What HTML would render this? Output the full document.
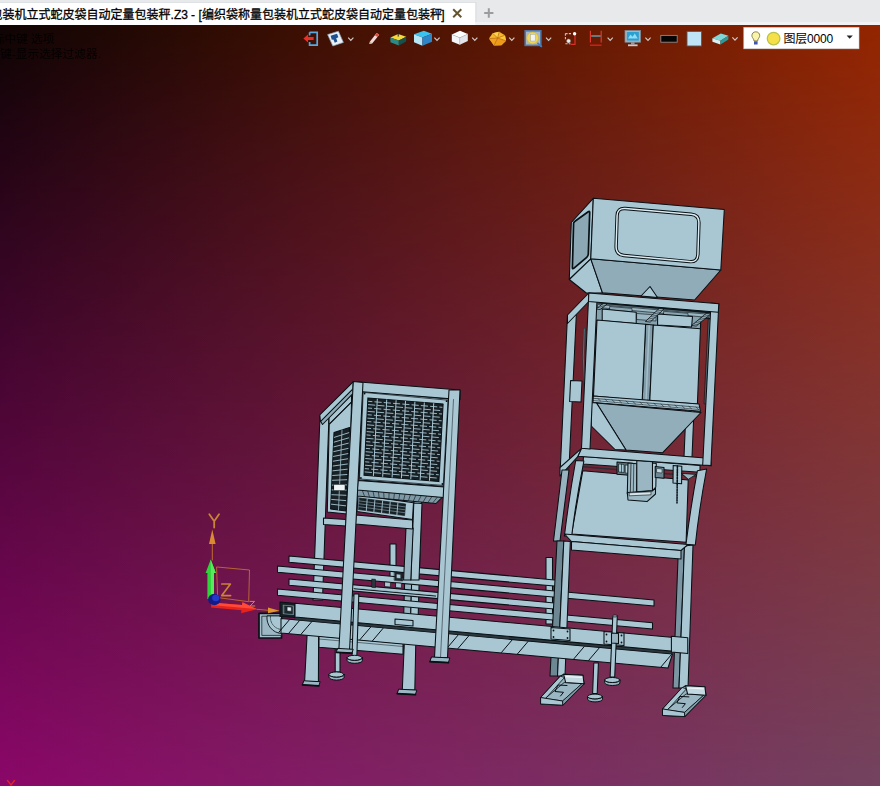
<!DOCTYPE html>
<html><head><meta charset="utf-8"><title>Z3</title>
<style>
html,body{margin:0;padding:0;width:880px;height:786px;overflow:hidden;background:#3a0a20;font-family:"Liberation Sans",sans-serif;}
svg{position:absolute;left:0;top:0;display:block}
</style></head><body>
<svg width="880" height="786" viewBox="0 0 880 786">
<defs>
<linearGradient id="gt" x1="0" y1="0" x2="1" y2="0"><stop offset="0" stop-color="#0e0403"/><stop offset="1" stop-color="#932500"/></linearGradient>
<linearGradient id="gb" x1="0" y1="0" x2="1" y2="0"><stop offset="0" stop-color="#8b0869"/><stop offset="1" stop-color="#73435f"/></linearGradient>
<linearGradient id="gm" x1="0" y1="0" x2="0" y2="1"><stop offset="0" stop-color="#fff"/><stop offset="1" stop-color="#000"/></linearGradient>
<mask id="mk" maskUnits="userSpaceOnUse" x="0" y="25" width="880" height="761"><rect x="0" y="25" width="880" height="761" fill="url(#gm)"/></mask>
</defs>
<rect x="0" y="25" width="880" height="761" fill="url(#gb)"/>
<rect x="0" y="25" width="880" height="761" fill="url(#gt)" mask="url(#mk)"/>
<!-- hint text -->
<g fill="#000" opacity="0.85" font-family="'Liberation Sans','Noto Sans CJK SC',sans-serif" font-size="11.7">
<text x="-18.9" y="42.5">鼠标中键 选项</text>
<text x="-11.5" y="58.2">右键-显示选择过滤器.</text>
</g>
<!-- model -->
<g stroke-linejoin="round" stroke-linecap="round">
<polygon points="320.0,416.0 329.0,416.0 322.5,600.0 313.0,600.0" fill="#a9c6d3" stroke="#081014" stroke-width="1.05" />
<polygon points="307.2,633.0 318.6,634.0 318.4,681.5 304.6,681.5" fill="#a9c6d3" stroke="#081014" stroke-width="1.05" />
<polygon points="304.2,680.8 320.2,681.7 318.8,685.8 302.6,684.9" fill="#9bb7c3" stroke="#081014" stroke-width="1.0" />
<polyline points="302.6,684.9 318.8,685.8" fill="none" stroke="#081014" stroke-width="1.8" />
<polygon points="407.0,500.0 414.0,500.0 410.0,640.0 403.0,640.0" fill="#97b3bf" stroke="#081014" stroke-width="1.05" />
<polygon points="414.0,500.0 421.5,500.0 417.5,640.0 410.0,640.0" fill="#a9c6d3" stroke="#081014" stroke-width="1.05" />
<polygon points="404.4,641.0 415.8,642.0 414.8,690.0 402.3,690.0" fill="#a9c6d3" stroke="#081014" stroke-width="1.05" />
<polygon points="399.0,689.2 416.8,690.1 415.4,694.6 397.4,693.7" fill="#9bb7c3" stroke="#081014" stroke-width="1.0" />
<polyline points="397.4,693.7 415.4,694.6" fill="none" stroke="#081014" stroke-width="1.8" />
<polygon points="390.0,544.0 396.0,544.0 396.0,582.0 390.0,582.0" fill="#a9c6d3" stroke="#081014" stroke-width="1.05" />
<polygon points="351.5,394.5 329.0,416.6 329.0,424.3 351.5,402.2" fill="#a9c6d3" stroke="#081014" stroke-width="1.05" />
<polygon points="353.4,388.0 320.4,421.0 322.5,424.5 353.4,393.2" fill="#8fabb7" stroke="#081014" stroke-width="1.05" />
<polygon points="353.4,381.7 319.8,414.8 320.4,421.6 353.4,388.4" fill="#a9c6d3" stroke="#081014" stroke-width="1.05" />
<polygon points="329.2,424.3 351.5,402.2 351.0,424.0 347.2,514.0 327.3,512.0" fill="#a9c6d3" stroke="#081014" stroke-width="1.05" />
<polygon points="334.0,432.5 349.6,427.5 346.0,511.0 330.6,509.0" fill="#182226" stroke="#081014" stroke-width="1.05" />
<polyline points="334.4,437.3 348.8,432.7" fill="none" stroke="#98b4c0" stroke-width="1.0" />
<polyline points="334.2,442.1 348.6,437.9" fill="none" stroke="#98b4c0" stroke-width="1.0" />
<polyline points="334.0,446.8 348.3,443.2" fill="none" stroke="#98b4c0" stroke-width="1.0" />
<polyline points="333.8,451.6 348.1,448.4" fill="none" stroke="#98b4c0" stroke-width="1.0" />
<polyline points="333.5,456.4 347.9,453.6" fill="none" stroke="#98b4c0" stroke-width="1.0" />
<polyline points="333.3,461.2 347.6,458.8" fill="none" stroke="#98b4c0" stroke-width="1.0" />
<polyline points="333.1,466.0 347.4,464.0" fill="none" stroke="#98b4c0" stroke-width="1.0" />
<polyline points="332.9,470.8 347.2,469.2" fill="none" stroke="#98b4c0" stroke-width="1.0" />
<polyline points="332.7,475.5 347.0,474.5" fill="none" stroke="#98b4c0" stroke-width="1.0" />
<polyline points="332.5,480.3 346.8,479.7" fill="none" stroke="#98b4c0" stroke-width="1.0" />
<polyline points="332.3,485.1 346.5,484.9" fill="none" stroke="#98b4c0" stroke-width="1.0" />
<polyline points="332.1,489.9 346.3,490.1" fill="none" stroke="#98b4c0" stroke-width="1.0" />
<polyline points="331.8,494.7 346.1,495.3" fill="none" stroke="#98b4c0" stroke-width="1.0" />
<polyline points="331.6,499.4 345.8,500.6" fill="none" stroke="#98b4c0" stroke-width="1.0" />
<polyline points="331.4,504.2 345.6,505.8" fill="none" stroke="#98b4c0" stroke-width="1.0" />
<polyline points="342.0,430.0 338.5,510.0" fill="none" stroke="#9fbcc8" stroke-width="0.8" />
<polygon points="334.0,484.5 345.0,484.5 345.0,490.5 334.0,490.5" fill="#eef4f6" stroke="#081014" stroke-width="0.5" />
<polygon points="323.5,518.0 346.0,519.5 346.0,526.0 323.5,524.5" fill="#a9c6d3" stroke="#081014" stroke-width="1.05" />
<polygon points="358.0,495.1 413.5,502.8 412.5,519.5 357.0,511.6" fill="#a9c6d3" stroke="#081014" stroke-width="1.05" />
<polygon points="359.5,498.0 405.6,504.0 404.6,515.6 358.6,509.6" fill="#182226" stroke="#081014" stroke-width="0.6" />
<polyline points="359.3,500.9 405.4,506.9" fill="none" stroke="#7c97a2" stroke-width="0.7" />
<polyline points="359.1,503.8 405.1,509.8" fill="none" stroke="#7c97a2" stroke-width="0.7" />
<polyline points="358.8,506.7 404.9,512.7" fill="none" stroke="#7c97a2" stroke-width="0.7" />
<polyline points="367.2,499.0 366.3,510.6" fill="none" stroke="#a9c6d3" stroke-width="0.9" />
<polyline points="374.9,500.0 373.9,511.6" fill="none" stroke="#a9c6d3" stroke-width="0.9" />
<polyline points="382.6,501.0 381.6,512.6" fill="none" stroke="#a9c6d3" stroke-width="0.9" />
<polyline points="390.2,502.0 389.3,513.6" fill="none" stroke="#a9c6d3" stroke-width="0.9" />
<polyline points="397.9,503.0 396.9,514.6" fill="none" stroke="#a9c6d3" stroke-width="0.9" />
<polygon points="567.5,315.0 576.3,315.0 569.0,468.0 560.3,468.0" fill="#a9c6d3" stroke="#081014" stroke-width="1.05" />
<polygon points="588.8,293.0 567.5,315.0 567.5,323.5 588.8,301.5" fill="#a9c6d3" stroke="#081014" stroke-width="1.05" />
<polygon points="570.6,380.5 582.0,381.0 581.0,402.0 569.6,401.5" fill="#a9c6d3" stroke="#081014" stroke-width="1.05" />
<path d="M584.3 329 Q582.2 357 584.6 386" fill="none" stroke="#22343a" stroke-width="1.8"/>
<path d="M584.3 329 Q582.2 357 584.6 386" fill="none" stroke="#7f9aa6" stroke-width="0.6"/>
<polygon points="686.0,410.0 694.0,410.0 692.0,457.0 684.0,457.0" fill="#a9c6d3" stroke="#081014" stroke-width="1.05" />
<polygon points="581.5,448.3 560.0,467.5 560.0,476.0 578.0,456.4" fill="#a9c6d3" stroke="#081014" stroke-width="1.05" />
<polygon points="562.0,470.0 569.0,470.0 560.0,541.0 553.5,541.0" fill="#97b3bf" stroke="#081014" stroke-width="1.05" />
<polygon points="582.8,470.7 688.2,479.9 686.1,542.3 571.6,534.1" fill="#a9c6d3" stroke="#081014" stroke-width="1.05" />
<polyline points="580.0,466.5 700.0,476.5" fill="none" stroke="#2a2f33" stroke-width="1.6" />
<polygon points="546.0,557.5 552.5,557.5 552.5,624.0 546.0,624.0" fill="#a9c6d3" stroke="#081014" stroke-width="1.05" />
<polygon points="289.0,556.0 560.0,580.4 560.0,586.6 289.0,562.2" fill="#a9c6d3" stroke="#081014" stroke-width="1.05" />
<polygon points="289.0,579.0 560.0,603.4 560.0,609.6 289.0,585.2" fill="#a9c6d3" stroke="#081014" stroke-width="1.05" />
<polygon points="277.5,566.0 654.0,599.9 654.0,606.1 277.5,572.2" fill="#a9c6d3" stroke="#081014" stroke-width="1.05" />
<polygon points="277.5,589.0 652.5,622.8 652.5,629.0 277.5,595.2" fill="#a9c6d3" stroke="#081014" stroke-width="1.05" />
<polygon points="394.5,572.0 402.7,572.7 402.7,581.0 394.5,580.3" fill="#1d282c" stroke="#081014" stroke-width="0.5" />
<polygon points="396.5,574.0 400.7,574.4 400.7,578.6 396.5,578.2" fill="#a9c6d3" stroke="#081014" stroke-width="0.4" />
<polygon points="372.0,579.0 375.5,579.3 375.5,587.7 372.0,587.4" fill="#2a363b" stroke="#081014" stroke-width="0.5" />
<polygon points="385.0,582.0 390.4,582.5 390.4,587.0 385.0,586.5" fill="#a9c6d3" stroke="#081014" stroke-width="0.6" />
<polygon points="396.0,582.8 401.4,583.3 401.4,588.0 396.0,587.5" fill="#a9c6d3" stroke="#081014" stroke-width="0.6" />
<polyline points="354.3,588.6 435.5,595.9" fill="none" stroke="#081014" stroke-width="1.3" />
<polyline points="354.3,587.9 435.5,595.2" fill="none" stroke="#a9c6d3" stroke-width="0.6" />
<polygon points="557.0,541.0 563.8,541.0 557.5,676.0 550.0,676.0" fill="#6d8893" stroke="#081014" stroke-width="1.05" />
<polygon points="563.8,541.0 570.3,541.5 565.0,676.0 557.5,676.0" fill="#a9c6d3" stroke="#081014" stroke-width="1.05" />
<polygon points="563.6,674.3 583.0,675.3 584.0,683.8 562.8,705.2 541.0,704.0 541.0,697.6 560.6,676.2" fill="#97b3bf" stroke="#081014" stroke-width="1.05" />
<polygon points="560.6,676.2 564.5,677.5 545.5,698.6 541.0,697.6" fill="#a9c6d3" stroke="#081014" stroke-width="0.8" />
<polygon points="564.5,682.6 582.0,683.6 562.6,701.0 545.5,698.6" fill="#9bb7c3" stroke="#081014" stroke-width="0.8" />
<polygon points="541.0,697.6 562.6,701.0 562.8,705.2 541.0,704.0" fill="#a9c6d3" stroke="#081014" stroke-width="0.9" />
<polygon points="584.0,683.8 562.8,705.2 562.6,701.0 582.0,683.6" fill="#7f9aa6" stroke="#081014" stroke-width="0.8" />
<polygon points="563.6,674.3 583.0,675.3 584.0,683.8 565.7,682.6" fill="#c3d9e2" stroke="#081014" stroke-width="1.05" />
<polyline points="566.0,676.6 581.5,677.4" fill="none" stroke="#eef5f8" stroke-width="1.2" />
<polyline points="567.0,685.5 558.0,685.0 555.0,691.5 563.5,692.3 560.5,696.0" fill="none" stroke="#081014" stroke-width="1.0" />
<polygon points="678.5,546.0 684.5,546.0 679.0,688.0 673.0,688.0" fill="#7b96a2" stroke="#081014" stroke-width="1.05" />
<polygon points="684.5,546.0 693.0,545.0 688.0,688.0 679.0,688.0" fill="#a9c6d3" stroke="#081014" stroke-width="1.05" />
<polygon points="685.5,685.7 704.9,686.7 705.9,695.2 684.7,716.6 662.9,715.4 662.9,709.0 682.5,687.6" fill="#97b3bf" stroke="#081014" stroke-width="1.05" />
<polygon points="682.5,687.6 686.4,688.9 667.4,710.0 662.9,709.0" fill="#a9c6d3" stroke="#081014" stroke-width="0.8" />
<polygon points="686.4,694.0 703.9,695.0 684.5,712.4 667.4,710.0" fill="#9bb7c3" stroke="#081014" stroke-width="0.8" />
<polygon points="662.9,709.0 684.5,712.4 684.7,716.6 662.9,715.4" fill="#a9c6d3" stroke="#081014" stroke-width="0.9" />
<polygon points="705.9,695.2 684.7,716.6 684.5,712.4 703.9,695.0" fill="#7f9aa6" stroke="#081014" stroke-width="0.8" />
<polygon points="685.5,685.7 704.9,686.7 705.9,695.2 687.6,694.0" fill="#c3d9e2" stroke="#081014" stroke-width="1.05" />
<polyline points="687.9,688.0 703.4,688.8" fill="none" stroke="#eef5f8" stroke-width="1.2" />
<polyline points="688.9,696.9 679.9,696.4 676.9,702.9 685.4,703.7 682.4,707.4" fill="none" stroke="#081014" stroke-width="1.0" />
<polygon points="319.0,636.0 403.0,643.5 403.0,654.3 319.0,647.3" fill="#a9c6d3" stroke="#081014" stroke-width="1.05" />
<polyline points="319.0,639.0 403.0,646.5" fill="none" stroke="#081014" stroke-width="0.5" />
<polygon points="259.0,613.3 281.5,613.3 281.5,638.0 259.0,638.0" fill="#a3c0cc" stroke="#081014" stroke-width="1.7" />
<polygon points="262.2,616.2 281.5,616.2 281.5,635.4 262.2,635.4" fill="#9cb8c4" stroke="#081014" stroke-width="0.7" />
<path d="M267 616.2 A15.5 15.5 0 0 0 281.5 633.5 L281.5 616.2Z" fill="#a9c6d3" stroke="#081014" stroke-width="0.9"/>
<path d="M270.5 616.2 A12 12 0 0 0 281.5 629.5" fill="none" stroke="#081014" stroke-width="0.6" stroke-dasharray="1.6 1"/>
<polygon points="280.0,602.0 296.6,603.4 296.6,617.6 280.0,616.4" fill="#1a2428" stroke="#081014" stroke-width="1.05" />
<polygon points="282.5,604.2 294.4,605.2 294.4,615.6 282.5,614.6" fill="#6b858f" stroke="#081014" stroke-width="0.7" />
<polygon points="284.6,606.0 292.4,606.7 292.4,613.8 284.6,613.1" fill="#1f2a2e" stroke="#081014" stroke-width="0.5" />
<polygon points="287.3,606.9 291.3,607.2 291.3,611.2 287.3,610.9" fill="#dfeaee" stroke="#081014" stroke-width="0.4" />
<polygon points="281.0,618.6 672.5,654.0 668.0,668.0 281.0,633.0" fill="#a9c6d3" stroke="#081014" stroke-width="1.05" />
<polyline points="289.3,619.9 278.8,632.3" fill="none" stroke="#081014" stroke-width="1.0" />
<polyline points="299.3,620.8 288.8,633.2" fill="none" stroke="#081014" stroke-width="1.0" />
<polyline points="311.5,622.0 301.0,634.3" fill="none" stroke="#081014" stroke-width="1.0" />
<polyline points="370.5,627.3 360.0,639.6" fill="none" stroke="#081014" stroke-width="1.0" />
<polyline points="383.0,628.4 372.5,640.8" fill="none" stroke="#081014" stroke-width="1.0" />
<polyline points="458.0,635.2 447.5,647.6" fill="none" stroke="#081014" stroke-width="1.0" />
<polyline points="468.5,636.2 458.0,648.5" fill="none" stroke="#081014" stroke-width="1.0" />
<polyline points="512.0,640.1 501.5,652.4" fill="none" stroke="#081014" stroke-width="1.0" />
<polyline points="528.0,641.5 517.5,653.9" fill="none" stroke="#081014" stroke-width="1.0" />
<polyline points="584.2,646.6 573.7,659.0" fill="none" stroke="#081014" stroke-width="1.0" />
<polyline points="599.2,648.0 588.7,660.3" fill="none" stroke="#081014" stroke-width="1.0" />
<polyline points="671.5,654.5 661.0,666.9" fill="none" stroke="#081014" stroke-width="1.0" />
<polygon points="295.0,617.1 672.0,651.2 672.0,653.8 295.0,619.7" fill="#2b383e" stroke="#081014" stroke-width="0.3" />
<polygon points="295.0,603.3 687.5,638.8 687.5,652.6 295.0,617.1" fill="#a9c6d3" stroke="#081014" stroke-width="1.05" />
<polygon points="671.4,636.3 687.8,637.8 687.8,653.6 671.4,652.1" fill="#a9c6d3" stroke="#081014" stroke-width="1.05" />
<polygon points="551.0,627.5 570.0,629.0 570.0,640.5 551.0,639.0" fill="#a9c6d3" stroke="#081014" stroke-width="1.05" />
<circle cx="553.5" cy="630.5" r="0.9" fill="#081014"/>
<circle cx="567.5" cy="631.5" r="0.9" fill="#081014"/>
<circle cx="553.5" cy="637.0" r="0.9" fill="#081014"/>
<circle cx="567.5" cy="638.0" r="0.9" fill="#081014"/>
<polygon points="604.0,631.5 624.0,633.0 624.0,645.5 604.0,644.0" fill="#a9c6d3" stroke="#081014" stroke-width="1.05" />
<circle cx="606.5" cy="634.5" r="0.9" fill="#081014"/>
<circle cx="621.5" cy="635.5" r="0.9" fill="#081014"/>
<circle cx="606.5" cy="641.5" r="0.9" fill="#081014"/>
<circle cx="621.5" cy="642.5" r="0.9" fill="#081014"/>
<polygon points="395.0,619.0 413.0,620.5 413.0,626.0 395.0,624.5" fill="#a9c6d3" stroke="#081014" stroke-width="1.05" />
<polygon points="612.8,616.0 617.3,616.0 614.7,677.0 610.1,677.0" fill="#a9c6d3" stroke="#081014" stroke-width="1.05" />
<ellipse cx="615" cy="616" rx="2.6" ry="1" fill="#a9c6d3" stroke="#081014" stroke-width="0.7"/>
<polygon points="611.5,633.0 618.5,633.5 618.5,643.5 611.5,643.0" fill="#97b3bf" stroke="#081014" stroke-width="1.05" />
<path d="M604.7 680.0 a7.6 2.5 0 0 0 15.2 0 v3.0 a7.6 2.5 0 0 1 -15.2 0z" fill="#97b3bf" stroke="#081014" stroke-width="1"/>
<ellipse cx="612.3" cy="680.0" rx="7.6" ry="2.5" fill="#a9c6d3" stroke="#081014" stroke-width="1"/>
<polygon points="593.8,663.0 598.4,663.0 597.2,693.5 592.6,693.5" fill="#a9c6d3" stroke="#081014" stroke-width="1.05" />
<path d="M587.6 696.5 a7.4 2.4 0 0 0 14.8 0 v3.0 a7.4 2.4 0 0 1 -14.8 0z" fill="#97b3bf" stroke="#081014" stroke-width="1"/>
<ellipse cx="595.0" cy="696.5" rx="7.4" ry="2.4" fill="#a9c6d3" stroke="#081014" stroke-width="1"/>
<polygon points="354.0,594.0 358.8,594.0 356.8,657.0 352.0,657.0" fill="#a9c6d3" stroke="#081014" stroke-width="1.05" />
<path d="M347.1 657.8 a7.6 2.5 0 0 0 15.2 0 v3.0 a7.6 2.5 0 0 1 -15.2 0z" fill="#97b3bf" stroke="#081014" stroke-width="1"/>
<ellipse cx="354.7" cy="657.8" rx="7.6" ry="2.5" fill="#a9c6d3" stroke="#081014" stroke-width="1"/>
<polygon points="335.2,650.0 340.0,650.0 340.0,672.0 335.2,672.0" fill="#a9c6d3" stroke="#081014" stroke-width="1.05" />
<path d="M329.0 674.5 a7.5 2.6 0 0 0 15.0 0 v3.0 a7.5 2.6 0 0 1 -15.0 0z" fill="#97b3bf" stroke="#081014" stroke-width="1"/>
<ellipse cx="336.5" cy="674.5" rx="7.5" ry="2.6" fill="#a9c6d3" stroke="#081014" stroke-width="1"/>
<polygon points="357.0,489.0 442.5,497.0 436.0,503.5 357.5,496.0" fill="#7f9aa6" stroke="#081014" stroke-width="1.05" />
<polyline points="362.3,490.3 364.4,496.0" fill="none" stroke="#081014" stroke-width="0.6" />
<polyline points="367.7,490.8 369.3,496.4" fill="none" stroke="#081014" stroke-width="0.6" />
<polyline points="373.0,491.3 374.2,496.9" fill="none" stroke="#081014" stroke-width="0.6" />
<polyline points="378.4,491.8 379.1,497.4" fill="none" stroke="#081014" stroke-width="0.6" />
<polyline points="383.7,492.3 384.0,497.8" fill="none" stroke="#081014" stroke-width="0.6" />
<polyline points="389.1,492.8 388.9,498.3" fill="none" stroke="#081014" stroke-width="0.6" />
<polyline points="394.4,493.3 393.8,498.8" fill="none" stroke="#081014" stroke-width="0.6" />
<polyline points="399.8,493.8 398.8,499.2" fill="none" stroke="#081014" stroke-width="0.6" />
<polyline points="405.1,494.3 403.7,499.7" fill="none" stroke="#081014" stroke-width="0.6" />
<polyline points="410.4,494.8 408.6,500.2" fill="none" stroke="#081014" stroke-width="0.6" />
<polyline points="415.8,495.3 413.5,500.7" fill="none" stroke="#081014" stroke-width="0.6" />
<polyline points="421.1,495.8 418.4,501.1" fill="none" stroke="#081014" stroke-width="0.6" />
<polyline points="426.5,496.3 423.3,501.6" fill="none" stroke="#081014" stroke-width="0.6" />
<polyline points="431.8,496.8 428.2,502.1" fill="none" stroke="#081014" stroke-width="0.6" />
<polyline points="437.2,497.3 433.1,502.5" fill="none" stroke="#081014" stroke-width="0.6" />
<polygon points="413.8,503.0 422.0,503.5 419.0,580.0 410.8,580.0" fill="#a9c6d3" stroke="#081014" stroke-width="1.05" />
<polygon points="406.0,528.0 413.2,528.0 410.8,580.0 403.6,580.0" fill="#97b3bf" stroke="#081014" stroke-width="1.05" />
<polygon points="356.0,515.0 412.5,520.0 412.5,529.0 355.5,524.0" fill="#a9c6d3" stroke="#081014" stroke-width="1.05" />
<polygon points="362.5,391.0 449.0,399.0 444.0,486.5 359.0,480.0" fill="#a9c6d3" stroke="#081014" stroke-width="1.05" />
<polygon points="363.6,392.4 448.0,400.2 443.2,485.4 359.9,479.0" fill="none" stroke="#081014" stroke-width="0.7" />
<polygon points="367.9,397.9 443.1,403.9 438.9,481.6 364.0,475.3" fill="#161f23" stroke="#081014" stroke-width="1.05" />
<polyline points="368.2,401.3 442.4,407.3" fill="none" stroke="#98b4c0" stroke-width="1.0" stroke-dasharray="7.2 2.1" stroke-dashoffset="3.0" stroke-linecap="butt"/>
<polyline points="368.1,404.6 442.2,410.7" fill="none" stroke="#98b4c0" stroke-width="1.0" stroke-dasharray="7.2 2.1" stroke-dashoffset="0.0" stroke-linecap="butt"/>
<polyline points="367.9,408.0 442.1,414.0" fill="none" stroke="#98b4c0" stroke-width="1.0" stroke-dasharray="7.2 2.1" stroke-dashoffset="3.0" stroke-linecap="butt"/>
<polyline points="367.7,411.4 441.9,417.4" fill="none" stroke="#98b4c0" stroke-width="1.0" stroke-dasharray="7.2 2.1" stroke-dashoffset="0.0" stroke-linecap="butt"/>
<polyline points="367.6,414.7 441.7,420.8" fill="none" stroke="#98b4c0" stroke-width="1.0" stroke-dasharray="7.2 2.1" stroke-dashoffset="3.0" stroke-linecap="butt"/>
<polyline points="367.4,418.1 441.5,424.2" fill="none" stroke="#98b4c0" stroke-width="1.0" stroke-dasharray="7.2 2.1" stroke-dashoffset="0.0" stroke-linecap="butt"/>
<polyline points="367.2,421.5 441.3,427.5" fill="none" stroke="#98b4c0" stroke-width="1.0" stroke-dasharray="7.2 2.1" stroke-dashoffset="3.0" stroke-linecap="butt"/>
<polyline points="367.0,424.8 441.1,430.9" fill="none" stroke="#98b4c0" stroke-width="1.0" stroke-dasharray="7.2 2.1" stroke-dashoffset="0.0" stroke-linecap="butt"/>
<polyline points="366.9,428.2 441.0,434.3" fill="none" stroke="#98b4c0" stroke-width="1.0" stroke-dasharray="7.2 2.1" stroke-dashoffset="3.0" stroke-linecap="butt"/>
<polyline points="366.7,431.6 440.8,437.7" fill="none" stroke="#98b4c0" stroke-width="1.0" stroke-dasharray="7.2 2.1" stroke-dashoffset="0.0" stroke-linecap="butt"/>
<polyline points="366.5,434.9 440.6,441.1" fill="none" stroke="#98b4c0" stroke-width="1.0" stroke-dasharray="7.2 2.1" stroke-dashoffset="3.0" stroke-linecap="butt"/>
<polyline points="366.4,438.3 440.4,444.4" fill="none" stroke="#98b4c0" stroke-width="1.0" stroke-dasharray="7.2 2.1" stroke-dashoffset="0.0" stroke-linecap="butt"/>
<polyline points="366.2,441.6 440.2,447.8" fill="none" stroke="#98b4c0" stroke-width="1.0" stroke-dasharray="7.2 2.1" stroke-dashoffset="3.0" stroke-linecap="butt"/>
<polyline points="366.0,445.0 440.0,451.2" fill="none" stroke="#98b4c0" stroke-width="1.0" stroke-dasharray="7.2 2.1" stroke-dashoffset="0.0" stroke-linecap="butt"/>
<polyline points="365.9,448.4 439.9,454.6" fill="none" stroke="#98b4c0" stroke-width="1.0" stroke-dasharray="7.2 2.1" stroke-dashoffset="3.0" stroke-linecap="butt"/>
<polyline points="365.7,451.7 439.7,458.0" fill="none" stroke="#98b4c0" stroke-width="1.0" stroke-dasharray="7.2 2.1" stroke-dashoffset="0.0" stroke-linecap="butt"/>
<polyline points="365.5,455.1 439.5,461.3" fill="none" stroke="#98b4c0" stroke-width="1.0" stroke-dasharray="7.2 2.1" stroke-dashoffset="3.0" stroke-linecap="butt"/>
<polyline points="365.3,458.5 439.3,464.7" fill="none" stroke="#98b4c0" stroke-width="1.0" stroke-dasharray="7.2 2.1" stroke-dashoffset="0.0" stroke-linecap="butt"/>
<polyline points="365.2,461.8 439.1,468.1" fill="none" stroke="#98b4c0" stroke-width="1.0" stroke-dasharray="7.2 2.1" stroke-dashoffset="3.0" stroke-linecap="butt"/>
<polyline points="365.0,465.2 438.9,471.5" fill="none" stroke="#98b4c0" stroke-width="1.0" stroke-dasharray="7.2 2.1" stroke-dashoffset="0.0" stroke-linecap="butt"/>
<polyline points="364.8,468.6 438.8,474.8" fill="none" stroke="#98b4c0" stroke-width="1.0" stroke-dasharray="7.2 2.1" stroke-dashoffset="3.0" stroke-linecap="butt"/>
<polyline points="364.7,471.9 438.6,478.2" fill="none" stroke="#98b4c0" stroke-width="1.0" stroke-dasharray="7.2 2.1" stroke-dashoffset="0.0" stroke-linecap="butt"/>
<polyline points="377.3,399.1 373.4,475.6" fill="none" stroke="#a9c6d3" stroke-width="1.0" />
<polyline points="386.7,399.9 382.7,476.4" fill="none" stroke="#a9c6d3" stroke-width="1.0" />
<polyline points="396.1,400.6 392.1,477.2" fill="none" stroke="#a9c6d3" stroke-width="1.0" />
<polyline points="405.5,401.4 401.4,478.0" fill="none" stroke="#a9c6d3" stroke-width="1.0" />
<polyline points="414.9,402.1 410.8,478.7" fill="none" stroke="#a9c6d3" stroke-width="1.0" />
<polyline points="424.3,402.9 420.2,479.5" fill="none" stroke="#a9c6d3" stroke-width="1.0" />
<polyline points="433.7,403.6 429.5,480.3" fill="none" stroke="#a9c6d3" stroke-width="1.0" />
<circle cx="364.6" cy="393.6" r="0.9" fill="#081014"/>
<circle cx="446.6" cy="401.2" r="0.9" fill="#081014"/>
<circle cx="442.4" cy="484.0" r="0.9" fill="#081014"/>
<circle cx="360.9" cy="478.0" r="0.9" fill="#081014"/>
<polygon points="358.0,480.5 444.5,487.0 443.5,497.5 357.3,490.0" fill="#a9c6d3" stroke="#081014" stroke-width="1.05" />
<polygon points="353.3,381.6 460.0,390.0 460.0,399.5 353.0,391.0" fill="#a9c6d3" stroke="#081014" stroke-width="1.05" />
<polygon points="353.3,381.6 363.0,382.4 349.5,651.0 338.8,651.0" fill="#a9c6d3" stroke="#081014" stroke-width="1.05" />
<polygon points="449.0,390.0 460.0,390.0 447.5,657.5 434.5,657.5" fill="#a9c6d3" stroke="#081014" stroke-width="1.05" />
<polyline points="453.5,399.5 440.5,657.5" fill="none" stroke="#081014" stroke-width="0.5" />
<polygon points="338.0,648.4 353.2,649.3 351.8,653.2 336.4,652.3" fill="#9bb7c3" stroke="#081014" stroke-width="1.0" />
<polyline points="336.4,652.3 351.8,653.2" fill="none" stroke="#081014" stroke-width="1.8" />
<polygon points="431.8,657.0 449.8,657.9 448.4,662.6 430.2,661.7" fill="#9bb7c3" stroke="#081014" stroke-width="1.0" />
<polyline points="430.2,661.7 448.4,662.6" fill="none" stroke="#081014" stroke-width="1.8" />
<polygon points="593.3,198.3 571.3,222.5 569.3,279.5 590.8,258.8" fill="#a9c6d3" stroke="#081014" stroke-width="1.05" />
<path d="M575 221.2 L588.2 211.8 Q589.8 210.7 589.7 212.8 L588.3 254 Q588.2 256 586.7 257.3 L574 268.2 Q572.3 269.6 572.4 267.5 L573.6 223.3 Q573.7 222 575 221.2z" fill="#8ca8b4" stroke="#081014" stroke-width="1.7"/>
<polygon points="569.3,279.5 590.8,258.8 602.5,292.8 586.3,293.0" fill="#a9c6d3" stroke="#081014" stroke-width="1.05" />
<polygon points="590.8,258.8 720.8,270.0 694.6,300.0 602.5,292.8" fill="#90acb8" stroke="#081014" stroke-width="1.05" />
<polygon points="593.3,198.3 724.3,209.5 720.8,270.0 590.8,258.8" fill="#a9c6d3" stroke="#081014" stroke-width="1.05" />
<path d="M617.1 215.8 Q617.3 207.8 625.3 208.5 L691.2 214.3 Q699.2 215.0 698.9 223.0 L697.9 254.4 Q697.6 262.4 689.6 261.6 L623.9 255.5 Q615.9 254.7 616.1 246.7 Z" fill="none" stroke="#081014" stroke-width="3.4"/>
<path d="M617.1 215.8 Q617.3 207.8 625.3 208.5 L691.2 214.3 Q699.2 215.0 698.9 223.0 L697.9 254.4 Q697.6 262.4 689.6 261.6 L623.9 255.5 Q615.9 254.7 616.1 246.7 Z" fill="none" stroke="#dcebf1" stroke-width="1.5"/>
<polygon points="650.0,286.5 657.5,297.5 641.0,296.0" fill="#a9c6d3" stroke="#081014" stroke-width="1.05" />
<polygon points="596.3,300.5 711.3,310.6 711.0,318.5 700.8,318.0 700.4,330.0 595.5,320.5" fill="#86a2ae" stroke="#081014" stroke-width="1.05" />
<polygon points="596.3,300.5 711.3,310.6 711.2,313.4 596.2,303.2" fill="#0f191d" stroke="#081014" stroke-width="0.4" />
<polygon points="598.0,304.5 709.0,314.3 709.0,317.5 598.0,307.5" fill="#9bb7c3" stroke="#081014" stroke-width="0.6" />
<polygon points="610.0,306.5 632.0,308.4 632.0,311.8 610.0,310.0" fill="#8aa6b2" stroke="#081014" stroke-width="0.6" />
<polygon points="664.0,311.3 688.0,313.3 688.0,316.8 664.0,314.8" fill="#8aa6b2" stroke="#081014" stroke-width="0.6" />
<polygon points="602.2,308.9 636.2,312.3 636.2,323.4 602.2,320.8" fill="#a9c6d3" stroke="#081014" stroke-width="1.05" />
<polygon points="657.6,314.0 692.5,316.5 691.6,327.0 657.6,325.0" fill="#a9c6d3" stroke="#081014" stroke-width="1.05" />
<polygon points="637.0,313.5 656.0,315.0 656.0,321.0 637.0,319.5" fill="#9bb7c3" stroke="#081014" stroke-width="0.6" />
<polygon points="603.5,303.5 607.1,304.1 600.1,309.6 596.5,309.0" fill="#9db9c5" stroke="#081014" stroke-width="0.8" />
<polyline points="602.1,304.9 605.0,305.5" fill="none" stroke="#081014" stroke-width="0.55" />
<polyline points="600.4,306.2 603.2,306.9" fill="none" stroke="#081014" stroke-width="0.55" />
<polyline points="598.6,307.6 601.5,308.2" fill="none" stroke="#081014" stroke-width="0.55" />
<polygon points="659.5,308.5 663.9,309.1 650.2,322.1 645.8,321.5" fill="#9db9c5" stroke="#081014" stroke-width="0.8" />
<polyline points="658.2,310.1 661.8,310.7" fill="none" stroke="#081014" stroke-width="0.55" />
<polyline points="656.5,311.8 660.1,312.4" fill="none" stroke="#081014" stroke-width="0.55" />
<polyline points="654.8,313.4 658.4,314.0" fill="none" stroke="#081014" stroke-width="0.55" />
<polyline points="653.0,315.0 656.6,315.6" fill="none" stroke="#081014" stroke-width="0.55" />
<polyline points="651.3,316.6 654.9,317.2" fill="none" stroke="#081014" stroke-width="0.55" />
<polyline points="649.6,318.2 653.2,318.9" fill="none" stroke="#081014" stroke-width="0.55" />
<polyline points="647.9,319.9 651.5,320.5" fill="none" stroke="#081014" stroke-width="0.55" />
<polygon points="706.5,313.5 710.7,314.1 696.2,326.1 692.0,325.5" fill="#9db9c5" stroke="#081014" stroke-width="0.8" />
<polyline points="705.1,315.0 708.5,315.6" fill="none" stroke="#081014" stroke-width="0.55" />
<polyline points="703.3,316.5 706.7,317.1" fill="none" stroke="#081014" stroke-width="0.55" />
<polyline points="701.5,318.0 704.9,318.6" fill="none" stroke="#081014" stroke-width="0.55" />
<polyline points="699.6,319.5 703.1,320.1" fill="none" stroke="#081014" stroke-width="0.55" />
<polyline points="697.8,321.0 701.2,321.6" fill="none" stroke="#081014" stroke-width="0.55" />
<polyline points="696.0,322.5 699.4,323.1" fill="none" stroke="#081014" stroke-width="0.55" />
<polyline points="694.2,324.0 697.6,324.6" fill="none" stroke="#081014" stroke-width="0.55" />
<polygon points="645.6,324.2 653.3,325.0 649.8,400.6 642.2,400.0" fill="#819ca8" stroke="#081014" stroke-width="1.05" />
<polyline points="649.2,326.0 646.0,401.0" fill="none" stroke="#a4c0cc" stroke-width="1.4" />
<polygon points="708.6,319.0 711.4,319.2 707.2,404.0 704.4,403.8" fill="#4e6872" stroke="#081014" stroke-width="0.6" />
<polygon points="597.0,320.0 645.6,324.2 642.2,400.4 593.5,396.0" fill="#a9c6d3" stroke="#081014" stroke-width="1.05" />
<polygon points="653.3,325.0 700.4,328.8 697.4,404.0 649.8,400.6" fill="#a9c6d3" stroke="#081014" stroke-width="1.05" />
<polygon points="593.3,396.0 699.0,404.0 700.5,411.3 593.0,402.5" fill="#a9c6d3" stroke="#081014" stroke-width="1.05" />
<polyline points="593.2,398.3 699.0,407.3" fill="none" stroke="#081014" stroke-width="0.6" />
<polyline points="593.2,400.5 699.0,409.5" fill="none" stroke="#081014" stroke-width="0.5" />
<polyline points="598.0,398.7 600.5,400.9" fill="none" stroke="#081014" stroke-width="0.5" />
<polyline points="605.0,399.3 607.5,401.5" fill="none" stroke="#081014" stroke-width="0.5" />
<polyline points="612.0,399.9 614.5,402.1" fill="none" stroke="#081014" stroke-width="0.5" />
<polyline points="619.0,400.5 621.5,402.7" fill="none" stroke="#081014" stroke-width="0.5" />
<polyline points="626.0,401.1 628.5,403.3" fill="none" stroke="#081014" stroke-width="0.5" />
<polyline points="633.0,401.7 635.5,403.9" fill="none" stroke="#081014" stroke-width="0.5" />
<polyline points="640.0,402.3 642.5,404.5" fill="none" stroke="#081014" stroke-width="0.5" />
<polyline points="647.0,402.9 649.5,405.1" fill="none" stroke="#081014" stroke-width="0.5" />
<polyline points="654.0,403.5 656.5,405.7" fill="none" stroke="#081014" stroke-width="0.5" />
<polyline points="661.0,404.1 663.5,406.3" fill="none" stroke="#081014" stroke-width="0.5" />
<polyline points="668.0,404.7 670.5,406.9" fill="none" stroke="#081014" stroke-width="0.5" />
<polyline points="675.0,405.3 677.5,407.5" fill="none" stroke="#081014" stroke-width="0.5" />
<polyline points="682.0,405.9 684.5,408.1" fill="none" stroke="#081014" stroke-width="0.5" />
<polyline points="689.0,406.5 691.5,408.7" fill="none" stroke="#081014" stroke-width="0.5" />
<polyline points="696.0,407.1 698.5,409.3" fill="none" stroke="#081014" stroke-width="0.5" />
<polygon points="596.5,403.0 701.0,412.5 662.5,452.8 626.0,450.0" fill="#92aeba" stroke="#081014" stroke-width="1.05" />
<polygon points="591.3,402.5 596.5,403.0 626.0,450.0 615.0,449.5 591.3,426.0" fill="#a9c6d3" stroke="#081014" stroke-width="1.05" />
<polygon points="583.5,456.6 700.0,465.4 700.0,472.2 583.0,464.0" fill="#a9c6d3" stroke="#081014" stroke-width="1.05" />
<polygon points="617.0,462.0 632.5,463.3 632.5,475.5 617.0,474.2" fill="#5d7782" stroke="#081014" stroke-width="1.05" />
<polygon points="619.0,464.0 624.0,464.4 624.0,472.5 619.0,472.0" fill="#a9c6d3" stroke="#081014" stroke-width="0.6" />
<polygon points="625.5,465.0 630.5,465.4 630.5,473.5 625.5,473.0" fill="#b9d2dc" stroke="#081014" stroke-width="0.6" />
<polyline points="621.5,464.2 621.5,472.2" fill="none" stroke="#081014" stroke-width="0.6" />
<polygon points="628.0,463.0 637.0,463.8 636.5,492.0 627.3,494.0" fill="#9db9c5" stroke="#081014" stroke-width="1.05" />
<polyline points="631.0,464.0 630.3,493.0" fill="none" stroke="#081014" stroke-width="0.7" />
<polyline points="633.8,464.0 633.3,492.5" fill="none" stroke="#081014" stroke-width="0.6" />
<polygon points="636.8,460.5 652.5,461.8 652.5,490.5 636.8,491.8" fill="#9ab6c2" stroke="#081014" stroke-width="1.05" />
<polygon points="652.5,463.0 656.3,463.5 655.8,487.0 652.5,490.5" fill="#b4ceda" stroke="#081014" stroke-width="1.05" />
<polygon points="655.2,466.6 664.0,467.4 664.0,478.2 655.2,477.4" fill="#6d8893" stroke="#081014" stroke-width="1.05" />
<polygon points="657.0,468.5 662.0,469.0 662.0,473.0 657.0,472.5" fill="#c4dae3" stroke="#081014" stroke-width="0.5" />
<polygon points="627.3,492.5 652.5,491.0 655.5,488.0 655.5,494.0 647.0,501.6 628.0,500.0" fill="#9db9c5" stroke="#081014" stroke-width="1.05" />
<polygon points="629.5,492.8 651.0,491.8 651.0,494.8 629.5,495.8" fill="#d6e6ec" stroke="#081014" stroke-width="0.6" />
<polygon points="673.2,465.4 681.8,466.2 681.6,483.8 673.0,483.0" fill="#a9c6d3" stroke="#081014" stroke-width="1.05" />
<polyline points="677.4,466.0 677.2,483.4" fill="none" stroke="#081014" stroke-width="1.6" stroke-dasharray="1.6 1.2"/>
<polyline points="677.2,484.0 677.0,503.0" fill="none" stroke="#081014" stroke-width="1.5" stroke-dasharray="1.5 1.1"/>
<polygon points="681.8,473.4 696.0,474.4 688.6,479.2" fill="#97b3bf" stroke="#081014" stroke-width="0.8" />
<path d="M575.7 460.5 L583.9 461 Q576 500 571.6 536.5 L564.4 536 Q569 498 575.7 460.5z" fill="#a9c6d3" stroke="#081014" stroke-width="1.05"/>
<path d="M697.4 470.7 L706.6 469 Q699 510 695.3 545 L686 544.3 Q690.5 508 697.4 470.7z" fill="#a9c6d3" stroke="#081014" stroke-width="1.05"/>
<polygon points="564.5,534.0 688.0,544.5 681.0,550.5 571.5,541.5" fill="#a9c6d3" stroke="#081014" stroke-width="1.05" />
<polygon points="571.5,541.5 681.0,550.5 681.0,559.0 571.5,550.0" fill="#a9c6d3" stroke="#081014" stroke-width="1.05" />
<polygon points="581.8,448.1 711.0,458.5 711.0,465.8 578.0,456.2" fill="#a9c6d3" stroke="#081014" stroke-width="1.05" />
<polygon points="588.8,293.0 597.3,294.0 590.0,449.0 581.5,448.3" fill="#a9c6d3" stroke="#081014" stroke-width="1.05" />
<polygon points="711.0,303.0 718.8,303.8 710.9,465.6 702.7,465.0" fill="#a9c6d3" stroke="#081014" stroke-width="1.05" />
<polygon points="588.8,293.0 718.8,303.8 718.3,312.3 588.5,301.5" fill="#a9c6d3" stroke="#081014" stroke-width="1.05" />
<path d="M217 567 L249.5 570 L248.7 601.7 L218 597.6Z" fill="none" stroke="#c9782f" stroke-width="0.8"/>
<path d="M212.3 544 V560" stroke="#c9782f" stroke-width="0.9"/>
<path d="M212.3 529.5 L215.6 544 L209 544Z" fill="#d98a32"/>
<path d="M209.3 514.3 L214.2 521.2 L219 514.3 M214.2 521.2 V527.5" fill="none" stroke="#c98436" stroke-width="1.8"/>
<path d="M221.8 584 H230.4 L221.8 595.6 H230.6" fill="none" stroke="#c98436" stroke-width="1.7"/>
<path d="M250 601.4 H254.6 L250 606 H254.8" fill="none" stroke="#d08a3c" stroke-width="1"/>
<path d="M210.7 559.5 L215.8 573 H214 V599 H207.4 V573 H205.6Z" fill="#2fd23a"/>
<path d="M210.7 559.5 L215.8 573 H214 V599 H211 Z" fill="#59e85e"/>
<path d="M211.5 602.5 L242 605 L242.5 602.2 L257 609.2 L241 613.2 L241.5 610.2 L211 607.5Z" fill="#e8221c"/>
<path d="M211.5 602.5 L242 605 L242.5 602.2 L257 609.2 L211.3 605Z" fill="#ff4a3a"/>
<ellipse cx="214.3" cy="599.5" rx="6.2" ry="5.8" fill="#131c86"/>
<ellipse cx="215.8" cy="598" rx="3.6" ry="3.2" fill="#2438cc"/>
<path d="M257 609.3 L268 610.3" stroke="#c9782f" stroke-width="0.8"/>
<path d="M279.5 610.8 L268 607.4 L268 613.2Z" fill="#e0952e"/>
<path d="M7.5 780.5 L11 785 L14.5 780.5 M11 785 V786" stroke="#e0202a" stroke-width="1.4" fill="none"/>
</g>
<!-- tab bar -->
<rect x="0" y="0" width="880" height="25" fill="#e7e9eb"/>
<rect x="476" y="22" width="404" height="3" fill="#f1f2f3"/>
<rect x="0" y="2.6" width="475.5" height="22.400" fill="#ffffff"/>
<rect x="0" y="2.200" width="475.5" height="0.600" fill="#d4d7da"/>
<rect x="475.5" y="2" width="0.800" height="20" fill="#d6d8da"/>
<text y="19" font-family="'Liberation Sans','Noto Sans CJK SC',sans-serif" font-size="12" fill="#000" stroke="#000" stroke-width="0.28"><tspan x="-9.4">包装机立式蛇皮袋自动定量包装秤</tspan><tspan x="170.6">.Z3</tspan><tspan x="191">-</tspan><tspan x="198.4">[</tspan><tspan x="202">编织袋称量包装机立式蛇皮袋自动定量包装秤</tspan><tspan x="441.2">]</tspan></text>
<path d="M453.2 9.2 L461.3 17.3 M461.3 9.2 L453.2 17.3" stroke="#65552e" stroke-width="1.95" fill="none"/>
<path d="M484.2 13 H493.4 M488.8 8.3 V17.7" stroke="#9c9c9c" stroke-width="2" fill="none"/>
<g id="toolbar">
<!-- chevrons -->
<g fill="none" stroke="#d2cac8" stroke-width="1.15">
<path d="M348.2 37.6l2.6 2.8l2.6-2.8"/>
<path d="M434.4 37.6l2.6 2.8l2.6-2.8"/>
<path d="M472.2 37.6l2.6 2.8l2.6-2.8"/>
<path d="M509.2 37.6l2.6 2.8l2.6-2.8"/>
<path d="M546 37.6l2.6 2.8l2.6-2.8"/>
<path d="M607.6 37.6l2.6 2.8l2.6-2.8"/>
<path d="M645.4 37.6l2.6 2.8l2.6-2.8"/>
<path d="M732.4 37.4l2.6 2.8l2.6-2.8"/>
</g>
<!-- 1 exit -->
<path d="M309.6 32.3h7.6v12.8h-7.6v-3 M309.6 35.4v-3.1" fill="none" stroke="#58a9e0" stroke-width="1.7"/>
<path d="M303.4 38.4l4.6-4v2.6h5.6v2.9h-5.6v2.6z" fill="#e4322b"/>
<!-- 2 view sheet -->
<path d="M327.6 34.6l10.8-3.4l5 11.2l-10.6 3.6z" fill="#e9f1f7" stroke="#8aa0b4" stroke-width="0.7"/>
<path d="M330.6 35.8l6.4-2l1.4 3.4l-2.2 1l1.2 3.4l-2.6 1.2l-1.4-3.4l-1.6 0.4z" fill="#1f4f8f"/>
<!-- 3 pencil -->
<path d="M370 41.6l6.6-8.6l2.6 1.8l-6.8 8.4l-3 0.8z" fill="#f3d9d6"/>
<path d="M374.9 35.2l1.7-2.2l2.6 1.8l-1.8 2.2z" fill="#e0483c"/>
<path d="M370 41.6l2.4 1.6l-3 0.8z" fill="#c9b8a0"/>
<!-- 4 yellow top box -->
<path d="M390.4 37.4l7.8-3.4l8 2.8l-7.4 3.8z" fill="#f2d93a"/>
<path d="M390.4 37.4l8.4 3.2v5l-8.4-3.4z" fill="#2a8a86"/>
<path d="M398.8 40.6l7.4-3.8v4.8l-7.4 4z" fill="#16504f"/>
<path d="M398.2 32.2v4.4" stroke="#222" stroke-width="1"/>
<!-- 5 blue cube -->
<path d="M414 34.2l9.8-3.4l8.2 3l-9.6 3.8z" fill="#39c3ee"/>
<path d="M414 34.2l8.4 3.4v8.2l-8.4-3.6z" fill="#b9e6f7"/>
<path d="M422.4 37.6l9.6-3.8v8l-9.6 4z" fill="#2d86c7"/>
<!-- 6 white cube -->
<path d="M451.8 34.4l8.2-3.6l7.8 3.2l-8 3.8z" fill="#ffffff"/>
<path d="M451.8 34.4l8 3.4v7l-8-3.4z" fill="#f4f6f8"/>
<path d="M459.8 37.8l8-3.8v7l-8 3.8z" fill="#e2e6ea"/>
<path d="M451.8 34.4l8 3.4l8-3.8M459.8 37.8v7" fill="none" stroke="#b9bfc6" stroke-width="0.6"/>
<!-- 7 yellow polyhedron -->
<path d="M489 38.6l3.6-5.4l6.6-1.4l5.8 3.4l1 5.6l-4.6 4.4l-7.4 0.4z" fill="#f3b62c"/>
<path d="M492.6 33.2l6.6-1.4l-1.6 6.2z" fill="#f9d34b"/>
<path d="M489 38.6l8.600-0.600l-3.600 7.600z" fill="#f0a11f"/>
<path d="M497.600 38l7.400-2.800l1 5.600z" fill="#f7c63a"/>
<path d="M497.600 38l8.400 2.800l-4.600 4.400l-7.400 0.400z" fill="#ee9a1a"/>
<path d="M489 38.6l8.600-0.600l-5-4.800M497.600 38l1.600-6.200M497.600 38l7.400-2.800M497.600 38l8.400 2.800M497.600 38l-3.600 7.600" fill="none" stroke="#b35f10" stroke-width="0.6"/>
<!-- 8 magnifier / doc -->
<rect x="525.2" y="30.8" width="15.6" height="14.6" fill="#a9b7c6" stroke="#4f79a8" stroke-width="1.6"/>
<circle cx="532.6" cy="38" r="5.9" fill="#efd65a" stroke="#c9b13c" stroke-width="0.6"/>
<rect x="530.6" y="34.4" width="4.6" height="6.6" fill="#f3f4f2" stroke="#9aa" stroke-width="0.5"/>
<path d="M537.4 42.8l4.400 4" stroke="#3f83c4" stroke-width="1.8"/>
<!-- 9 small bracket -->
<path d="M565.4 33.6h6.400M565.4 33.6v6M565.4 43.8h5" fill="none" stroke="#c9c0bd" stroke-width="1.1" stroke-dasharray="2.2 1.2"/>
<path d="M575 35v9.400l-4.400 0" fill="none" stroke="#d8312a" stroke-width="1.2"/>
<circle cx="574.6" cy="33.8" r="1.7" fill="#fff"/>
<circle cx="568.6" cy="41" r="2" fill="#e9ecef" stroke="#888" stroke-width="0.5"/>
<!-- 10 dimension H -->
<path d="M590.4 30.8v11.6M601.2 30.8v11.6" stroke="#e23b32" stroke-width="1.15"/>
<path d="M591.2 36h9.4" stroke="#67c8e8" stroke-width="1.1"/>
<path d="M590 45.200h11.6" stroke="#e21f1f" stroke-width="1.3"/>
<!-- 11 monitor -->
<rect x="625" y="30.4" width="15.600" height="11.8" fill="#aab4bd" stroke="#7b8791" stroke-width="0.8"/>
<rect x="626.8" y="32" width="12" height="8.6" fill="#2a9fd2"/>
<path d="M628 38.6l2.400-4l2.200 2.200l2.200-3.400l3 5.200z" fill="#8fdcf4"/>
<rect x="631" y="42.200" width="3.600" height="2.200" fill="#8e99a3"/>
<rect x="628" y="44.400" width="9.600" height="1.800" fill="#c4ccd3"/>
<!-- 12 black rect -->
<rect x="660.8" y="35.400" width="16.400" height="6.800" fill="#050505" stroke="#8e8a88" stroke-width="0.9"/>
<!-- 13 light blue square -->
<rect x="687" y="31.400" width="14.600" height="14.600" fill="#bfe4f6" stroke="#5b5552" stroke-width="0.9"/>
<!-- 14 teal layers box -->
<path d="M712.4 38.2l8.400-4.600l7.600 2.200l-8 5z" fill="#7fd8d6"/>
<path d="M712.4 38.2l8 2.600v3.800l-8-2.800z" fill="#d9eef2"/>
<path d="M720.4 40.800l8-5v3.800l-8 5z" fill="#2c9a9a"/>
<!-- 15 layer dropdown -->
<rect x="743.8" y="27.400" width="115.200" height="21.400" fill="#ffffff" stroke="#cfcfcf" stroke-width="0.6"/>
<path d="M755.8 31.800c-2.400 0-3.900 1.700-3.900 3.800c0 1.600 1 2.500 1.600 3.500c0.300 0.600 0.400 1.200 0.400 1.800h3.800c0-0.600 0.100-1.200 0.400-1.800c0.600-1 1.600-1.900 1.600-3.500c0-2.100-1.500-3.800-3.900-3.800z" fill="#fbf3a8" stroke="#6a6a3a" stroke-width="0.8"/>
<rect x="754" y="41.300" width="3.600" height="3.200" fill="#3f55b5"/>
<circle cx="773.6" cy="38.600" r="6.300" fill="#f6e04a" stroke="#b8c24a" stroke-width="1.3"/>
<path d="M846.6 35.400h6.200l-3.100 3.400z" fill="#222"/>
</g>

<text x="783.5" y="43.2" font-family="'Liberation Sans','Noto Sans CJK SC',sans-serif" font-size="12" fill="#000" textLength="49.6" lengthAdjust="spacing">图层0000</text>
</svg>
</body></html>
